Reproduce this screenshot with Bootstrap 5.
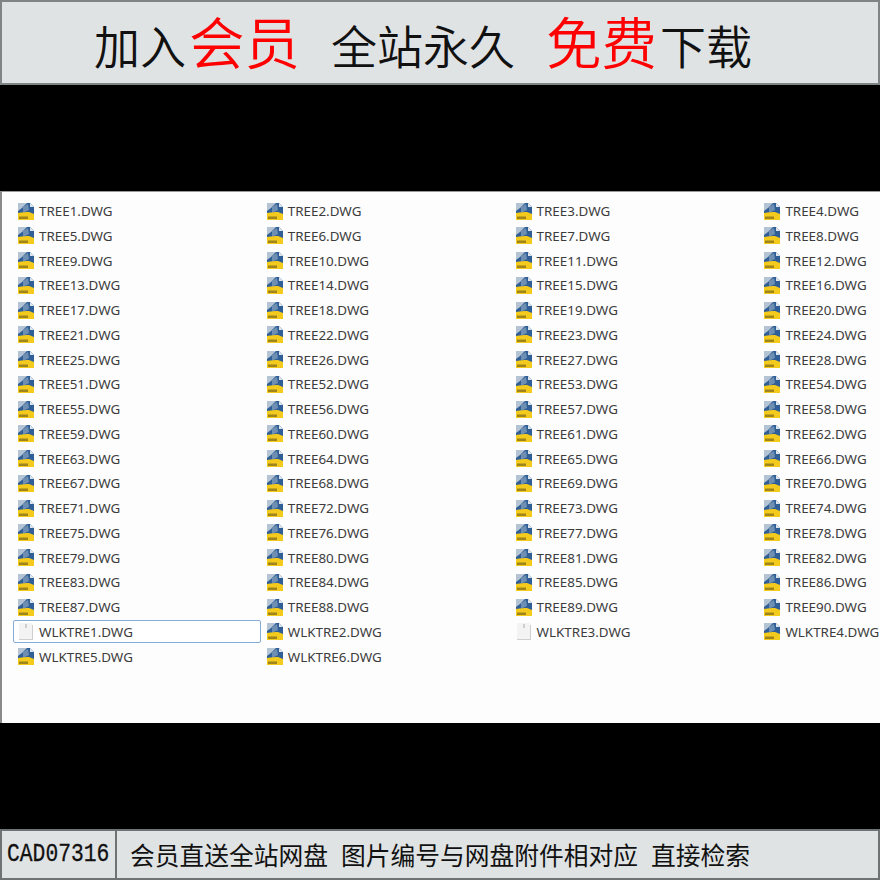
<!DOCTYPE html>
<html lang="zh-CN">
<head>
<meta charset="UTF-8">
<title>CAD07316</title>
<link href="https://cdn.jsdelivr.net/npm/bootstrap@5.3.3/dist/css/bootstrap.min.css" rel="stylesheet">
<style>
html, body { width: 880px; height: 880px; overflow: hidden; background: #000; }
.page-wrap { width: 880px; height: 880px; display: flex; flex-direction: column; font-family: "Noto Sans CJK SC", sans-serif; }
.top-banner { height: 85px; background: #e0e3e4; border: 2px solid #7f8486; padding-left: 92px; color: #111; font-size: 46px; font-weight: 350; line-height: 76px; white-space: nowrap; }
.top-banner .hot { color: #f00; font-size: 55.5px; }
.gap-a { margin-left: 31px; }
.gap-b { margin-left: 3px; }
.black-band { background: #000; height: 106px; flex: none; }
.file-panel { height: 532px; flex: none; background: #fdfdfd; border-top: 1px solid #9a9a9a; border-left: 2px solid #8a8a8a; padding: 7.6px 0 0 11px; overflow: hidden; font-family: "Noto Sans", sans-serif; }
.file-grid { display: grid; grid-template-columns: repeat(4, 248.8px); grid-auto-rows: 24.75px; width: 1000px; }
.file-item { display: flex; align-items: center; gap: 4px; padding-left: 3px; width: 248px; height: 23px; font-size: 13.4px; color: #3c3c3c; white-space: nowrap; border: 1px solid transparent; }
.file-item.picked { border-color: #84acd6; border-radius: 2px; background: #fff; }
.file-item svg { flex: none; width: 18px; height: 19px; }
.bottom-bar { height: 51px; flex: none; background: #e0e3e4; border: 2px solid #6e7375; display: flex; align-items: stretch; color: #111; white-space: nowrap; }
.code-box { width: 115px; flex: none; border-right: 2px solid #6e7375; padding-left: 5px; font: 26px/47px "Liberation Mono", monospace; -webkit-text-stroke: .3px #111; }
.code-box span { display: inline-block; transform: scaleX(.82); transform-origin: left center; }
.note-box { padding-left: 13px; font-size: 24.75px; line-height: 47px; }
.note-box span + span { margin-left: 13px; }
</style>
</head>
<body>
<svg width="0" height="0" class="position-absolute">
  <symbol id="dwg" viewBox="0 0 18 19" preserveAspectRatio="none">
    <path d="M1 1h12l4 4v13H1z" fill="#2f5f96"/>
    <path d="M1 1h9L5 6 1 9z" fill="#b4c4d4"/>
    <path d="M6 5l5-3 1 6-6 3z" fill="#6f8fb2"/>
    <path d="M13 1l4 4h-4z" fill="#dfe6ee"/>
    <path d="M1 11c5-1 8-1 11-1l5 2v6H1z" fill="#f4ca1c"/>
    <rect x="2" y="14.5" width="9" height="2.5" fill="#7a6a1c" opacity=".7"/>
  </symbol>
  <symbol id="blank" viewBox="0 0 18 19" preserveAspectRatio="none">
    <path d="M2 1h12l2 2v15H2z" fill="#f3f3f3"/>
    <path d="M16 3v15H2v-1h13V3z" fill="#cfcfcf"/>
    <path d="M8 3h2M8 5h2" stroke="#aaa"/>
  </symbol>
</svg>

<div class="page-wrap">
  <div class="top-banner">加入<span class="hot gap-b">会员</span><span class="gap-a">全站永久</span><span class="hot gap-a">免费</span><span class="gap-b">下载</span></div>
  <div class="black-band"></div>
  <div class="file-panel">
    <div class="file-grid" id="files"></div>
  </div>
  <div class="black-band"></div>
  <div class="bottom-bar">
    <div class="code-box"><span>CAD07316</span></div>
    <div class="note-box"><span>会员直送全站网盘</span><span>图片编号与网盘附件相对应</span><span>直接检索</span></div>
  </div>
</div>

<script>
const nums = [];
for (let i = 1; i <= 28; i++) nums.push(i);
for (let i = 51; i <= 90; i++) nums.push(i);
const names = nums.map(n => `TREE${n}.DWG`);
for (let i = 1; i <= 6; i++) names.push(`WLKTRE${i}.DWG`);

const grid = document.getElementById('files');
names.forEach(name => {
  const blank = name === 'WLKTRE1.DWG' || name === 'WLKTRE3.DWG';
  const picked = name === 'WLKTRE1.DWG' ? ' picked' : '';
  grid.insertAdjacentHTML('beforeend',
    `<div class="file-item${picked}"><svg><use href="#${blank ? 'blank' : 'dwg'}"></use></svg><span>${name}</span></div>`);
});
</script>
<script src="https://cdn.jsdelivr.net/npm/bootstrap@5.3.3/dist/js/bootstrap.bundle.min.js"></script>
</body>
</html>
